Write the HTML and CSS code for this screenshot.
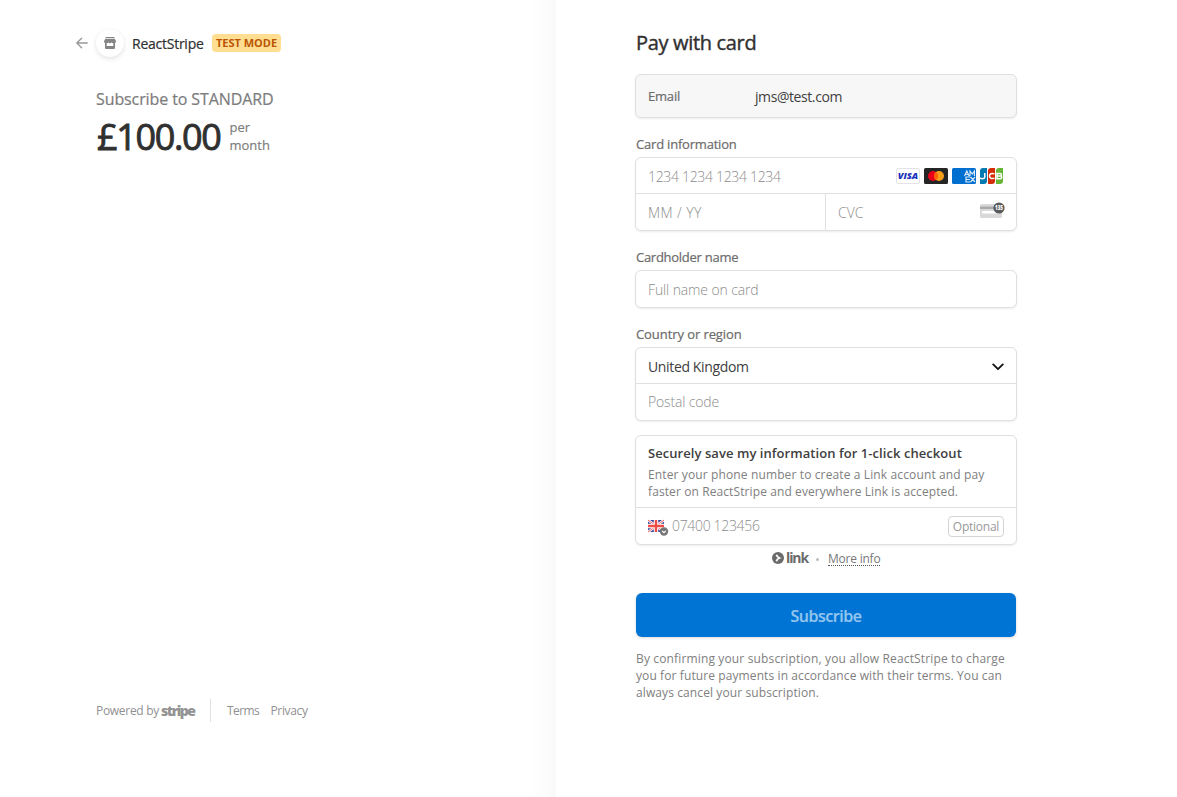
FILE: index.html
```html
<!DOCTYPE html>
<html lang="en">
<head>
<meta charset="utf-8">
<title>ReactStripe checkout</title>
<link rel="stylesheet" href="styles.css">
</head>
<body>
<div class="page">
  <section class="overview">
    <header class="business">
      <svg class="back" width="12" height="12" viewBox="0 0 12 12" fill="none" stroke="#989898" stroke-width="1.3" stroke-linecap="round" stroke-linejoin="round"><path d="M11.3 6H.9M5.600 1.200.8 6l4.800 4.800"/></svg>
      <span class="avatar"><svg width="12" height="12" viewBox="0 0 12 12"><path fill="#858585" fill-rule="evenodd" d="M1.500 0h9v1h-9zM1.200 1.800h9.600L12 4.300c0 .9-.4 1.500-1 1.800V11a1 1 0 0 1-1 1H2a1 1 0 0 1-1-1V6.100C.4 5.800 0 5.200 0 4.300zM2.700 6.200V9h6.600V6.200C8.500 6.200 8 5.900 7.600 5.500 7.200 6 6.600 6.200 6 6.200S4.800 6 4.400 5.500C4 5.900 3.500 6.200 2.700 6.200z"/></svg></span>
      <span class="business-name">ReactStripe</span>
      <span class="badge">TEST MODE</span>
    </header>
    <div class="product">Subscribe to STANDARD</div>
    <div class="price"><span class="amount">£100.00</span><span class="interval">per<br>month</span></div>
    <footer class="footer">
      <span class="powered">Powered by</span><span class="stripe">stripe</span>
      <span class="divider"></span>
      <span class="legal terms">Terms</span><span class="legal">Privacy</span>
    </footer>
  </section>
  <main class="payment">
    <h1 class="title">Pay with card</h1>
    <div class="box email"><span class="email-label">Email</span><span class="email-value">jms@test.com</span></div>

    <div class="label card-label">Card information</div>
    <div class="box">
      <div class="row first"><span class="hint number">1234 1234 1234 1234</span>
        <span class="brands">
          <svg width="24" height="16" viewBox="0 0 24 16"><rect x=".5" y=".5" width="23" height="15" rx="1.500" fill="#fff" stroke="#e3e3e8"/><text x="1.700" y="11.300" class="visa" textLength="20.500" lengthAdjust="spacingAndGlyphs">VISA</text></svg>
          <svg width="24" height="16" viewBox="0 0 24 16"><rect width="24" height="16" rx="1.500" fill="#252525"/><circle cx="9" cy="8" r="5" fill="#eb001b"/><circle cx="15" cy="8" r="5" fill="#f79e1b"/><path d="M12 4a5 5 0 0 1 0 8 5 5 0 0 1 0-8z" fill="#ff5f00"/></svg>
          <svg width="24" height="16" viewBox="0 0 24 16"><rect width="24" height="16" rx="1.500" fill="#016fd0"/><path d="m12.500 8 2.300-5 2.300 5M13.500 6.500h2.600M18 8V3l2.200 3 2.200-3v5M18.200 9H14v5h4.200M14 11.500h3.800M18.500 9l4.500 5M23 9l-4.500 5" fill="none" stroke="#fff" stroke-opacity=".85" stroke-width="1.200"/></svg>
          <svg width="24" height="16" viewBox="0 0 24 16"><path d="M3 0h4v13a3 3 0 0 1-3 3H0V3a3 3 0 0 1 3-3z" fill="#047ab1"/><path d="M11 0h4v13a3 3 0 0 1-3 3H8V3a3 3 0 0 1 3-3z" fill="#d42d06"/><path d="M19 0h4v13a3 3 0 0 1-3 3h-4V3a3 3 0 0 1 3-3z" fill="#67b637"/><path d="M4.800 5v4c0 1.700-2.200 2-4.800 1.200M14.500 5.900c-3-1-5-.2-5 2.100s2 3.100 5 2.100M17 5.500h3c2 0 2 2.500 0 2.500h-3zM17 8h3.300c2 0 2 2.700 0 2.700H17z" fill="none" stroke="#fff" stroke-width="1.500"/></svg>
        </span>
      </div>
      <div class="row split"><span class="cell expiry"><span class="hint mmyy">MM / YY</span></span><span class="cell cvc-cell"><span class="hint cvc">CVC</span>
        <svg class="cvc-icon" width="25" height="17" viewBox="0 0 25 17"><rect y="2" width="22" height="14" rx="1.500" fill="#d9d9d9"/><path d="M0 4.500h22v2.500H0z" fill="#aaa"/><rect x="2" y="9" width="17" height="2.500" rx=".5" fill="#fff"/><circle cx="19" cy="6" r="5.600" fill="#5a5a5a"/><text x="15" y="8.400" class="digits" textLength="8" lengthAdjust="spacingAndGlyphs">135</text></svg></span>
      </div>
    </div>

    <div class="label name-label">Cardholder name</div>
    <div class="box single"><span class="hint fullname">Full name on card</span></div>

    <div class="label country-label">Country or region</div>
    <div class="box">
      <div class="row first country"><span class="value">United Kingdom</span><svg class="chevron" width="12" height="8" viewBox="0 0 12 8" fill="none" stroke="#111" stroke-width="1.800" stroke-linecap="round" stroke-linejoin="round"><path d="M1.200 1.400 6 6.200l4.800-4.800"/></svg></div>
      <div class="row postal-row"><span class="hint postal">Postal code</span></div>
    </div>

    <div class="box link-box">
      <div class="save">
        <div class="save-title">Securely save my information for 1-click checkout</div>
        <div class="small"><span class="save-a">Enter your phone number to create a Link account and pay</span><br><span class="save-b">faster on ReactStripe and everywhere Link is accepted.</span></div>
      </div>
      <div class="row phone">
        <svg class="flag" width="21" height="18" viewBox="0 0 21 18"><path fill="#33419a" d="M0 2h16v12H0z"/><path d="m0 2 16 12M16 2 0 14" stroke="#fff" stroke-width="2.500"/><path d="m0 2 16 12M16 2 0 14" stroke="#e8605c" stroke-width="1"/><path d="M8 2v12M0 8h16" stroke="#fff" stroke-width="4.500"/><path d="M8 2v12M0 8h16" stroke="#ee4e45" stroke-width="2.400"/><circle cx="16" cy="13.500" r="4.200" fill="#777"/><path d="m14.200 12.800 1.800 1.800 1.800-1.800" fill="none" stroke="#fff" stroke-width="1.200"/></svg>
        <span class="hint phone-number">07400 123456</span><span class="optional">Optional</span>
      </div>
    </div>
    <div class="link-line">
      <svg width="12" height="12" viewBox="0 0 12 12"><circle cx="6" cy="6" r="6" fill="#6b6b6b"/><path d="M4.400 2.800c.4 1.500 1.400 2.500 3 3.200-1.600.7-2.600 1.700-3 3.200" fill="none" stroke="#fff" stroke-width="1.800"/></svg>
      <span class="link-logo">link</span><span class="dot"></span><span class="more">More info</span>
    </div>
    <button class="submit" type="button">Subscribe</button>
    <div class="small terms-copy"><span class="t1">By confirming your subscription, you allow ReactStripe to charge</span><br><span class="t2">you for future payments in accordance with their terms. You can</span><br><span class="t3">always cancel your subscription.</span></div>
  </main>
</div>
</body>
</html>
```

FILE: styles.css
```css
* { box-sizing: border-box; }
body { margin: 0; background: #fff; font-family: "Open Sans", "Noto Sans", sans-serif; color: #303030; font-size: 14px; white-space: nowrap; }
svg { display: block; flex: none; }
.page { display: flex; height: 797px; overflow: hidden; }
.overview { display: flex; flex-direction: column; width: 556px; padding: 28px 0 75px 76px; background: linear-gradient(to right, #fff 530px, #fdfdfd 540px, #fbfbfb 550px, #f8f8f8); }
.business { display: flex; align-items: center; height: 30px; }
.avatar { display: flex; align-items: center; justify-content: center; width: 28px; height: 28px; margin: 0 8px; border-radius: 50%; background: #fff; box-shadow: 0 2px 5px rgba(0,0,0,.11), 0 0 2px rgba(0,0,0,.03); }
.business-name { width: 80px; letter-spacing: -.25px; -webkit-text-stroke: .2px; }
.badge { width: 69px; height: 18px; border-radius: 4px; background: #ffde92; color: #bb5504; font-size: 11px; line-height: 18px; font-weight: 700; text-align: center; }
.product { margin: 30px 0 0 20px; color: #7c7c7c; font-size: 16px; line-height: 22px; letter-spacing: -.1px; -webkit-text-stroke: .2px; }
.price { display: flex; align-items: center; margin: 5px 0 0 21px; height: 44px; }
.amount { width: 132.5px; font-size: 36px; line-height: 44px; letter-spacing: -1.35px; -webkit-text-stroke: .9px; }
.interval { color: #7c7c7c; font-size: 13px; line-height: 18px; margin-top: -2px; -webkit-text-stroke: .15px; }
.footer { display: flex; align-items: center; height: 24px; margin: auto 0 0 20px; color: #919191; font-size: 12px; }
.powered { width: 65px; letter-spacing: -.3px; }
.stripe { width: 49px; color: #939393; font-size: 14px; font-weight: 800; letter-spacing: -1.5px; }
.divider { width: 1px; height: 23px; background: #e1e1e1; margin-right: 16px; }
.terms { width: 43.5px; }
.legal { letter-spacing: -.35px; }
.terms.legal { letter-spacing: -.8px; letter-spacing: -.6px; }
.payment { width: 382px; margin-left: 79px; padding-top: 30px; }
.title { margin: 0 0 18px 1px; font-size: 20px; line-height: 26px; font-weight: 400; letter-spacing: -.33px; -webkit-text-stroke: .4px; }
.box { border: 1px solid #e0e0e0; border-radius: 6px; background: #fff; box-shadow: 0 1px 2px rgba(0,0,0,.08); }
.email { display: flex; align-items: center; height: 44px; padding-left: 12px; background: #f7f7f7; }
.email-label { width: 107px; color: #6c6c6c; font-size: 13px; letter-spacing: -.2px; -webkit-text-stroke: .2px; }
.email-value { color: #404040; letter-spacing: -.42px; }
.label { height: 18px; margin: 17px 0 4px 1px; color: #6c6c6c; font-size: 13px; line-height: 18px; -webkit-text-stroke: .2px; }
.card-label { letter-spacing: -.2px; }
.name-label { letter-spacing: -.27px; }
.country-label { letter-spacing: -.08px; }
.row { display: flex; align-items: center; height: 36px; padding: 0 12px; }
.first { border-bottom: 1px solid #e0e0e0; }
.hint { color: #8c8c8c; font-weight: 300; font-size: 14px; }
.number { letter-spacing: -.32px; padding-top: 2px; }
.mmyy { letter-spacing: .4px; }
.fullname { letter-spacing: -.12px; }
.postal { letter-spacing: -.15px; margin-top: -1px; }
.brands { display: flex; gap: 4px; margin-left: auto; }
.visa { font: italic 800 9.5px "Open Sans", sans-serif; fill: #1a31bd; }
.digits { font: 800 6.5px "Open Sans", sans-serif; fill: #fff; }
.split { padding: 0; }
.cell { display: flex; align-items: center; height: 36px; padding-left: 12px; }
.expiry { width: 190px; border-right: 1px solid #e0e0e0; }
.cvc-cell { flex: 1; padding-right: 11px; }
.cvc-icon { margin: -4px 0 0 auto; }
.single { display: flex; align-items: center; height: 38px; padding-left: 12px; }
.country { justify-content: space-between; }
.value { padding-top: 2px; color: #404040; letter-spacing: -.36px; }
.chevron { margin-top: 2px; }
.link-box { margin-top: 14px; height: 110px; }
.save { height: 72px; padding: 8px 0 0 12px; border-bottom: 1px solid #e0e0e0; }
.save-title { font-size: 13px; line-height: 18px; font-weight: 600; letter-spacing: .06px; color: #404040; margin-bottom: 4px; }
.small { color: #808080; font-size: 12px; line-height: 17px; }
.save-a { letter-spacing: .125px; }
.save-b { letter-spacing: .1px; }
.flag { margin-top: 2px; }
.phone-number { margin: -1px 0 0 3px; letter-spacing: -.33px; }
.optional { width: 56px; height: 21px; margin-left: auto; border: 1px solid #d4d4d4; border-radius: 4px; color: #999; font-size: 12px; line-height: 19px; text-align: center; letter-spacing: -.25px; }
.link-line { display: flex; align-items: center; height: 16px; margin: 5px 0 0 137px; color: #6b6b6b; }
.link-logo { width: 33px; margin-left: 2px; font-size: 14px; line-height: 16px; font-weight: 700; letter-spacing: -1.1px; }
.dot { width: 3px; height: 3px; border-radius: 50%; background: #bbb; margin: 3px 9px 0 -3px; }
.more { font-size: 12px; line-height: 13px; margin-top: 2px; color: #777; border-bottom: 1px dotted #555; letter-spacing: -.22px; }
.submit { display: block; width: 380px; height: 44px; margin: 27px 0 0 1px; padding: 1px 0 0; border: 0; border-radius: 6px; background: #0074d4; color: #93c5ef; font: 600 16px "Open Sans", sans-serif; letter-spacing: -.45px; -webkit-text-stroke: .2px; box-shadow: 0 1px 3px rgba(0,0,0,.15); }
.terms-copy { margin: 13px 0 0 1px; }
.t1 { letter-spacing: .145px; }
.t2 { letter-spacing: .1px; }
.t3 { letter-spacing: .1px; }
```
